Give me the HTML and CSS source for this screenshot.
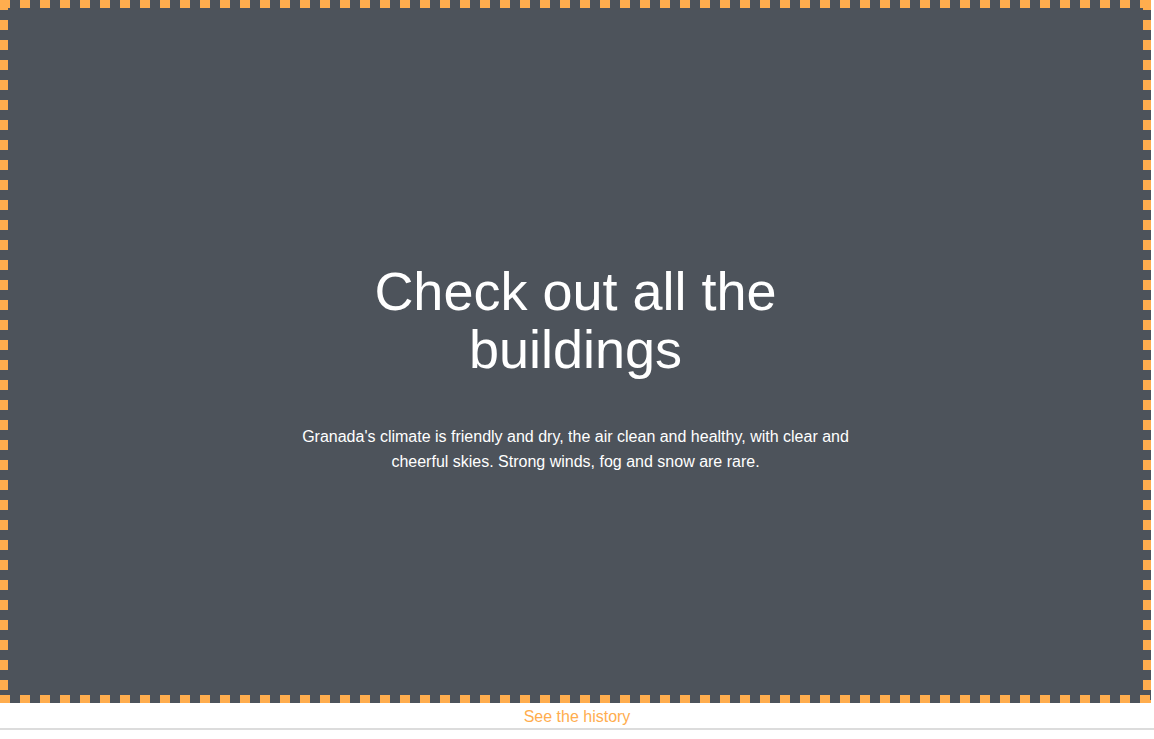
FILE: index.html
```html
<!DOCTYPE html>
<html>
<head>
<meta charset="utf-8">
<link rel="stylesheet" href="styles.css">
</head>
<body>
<section class="hero">
  <div class="hero-content">
    <h1 class="hero-title">Check out all the buildings</h1>
    <p class="hero-text">Granada's climate is friendly and dry, the air clean and healthy, with clear and cheerful skies. Strong winds, fog and snow are rare.</p>
  </div>
</section>
<div class="footer-link">
  <a class="history-link" href="#">See the history</a>
</div>
<div class="bottom-rule"></div>
</body>
</html>
```

FILE: styles.css
```css
html, body {
  margin: 0;
  padding: 0;
  background: #ffffff;
  font-family: "Liberation Sans", Arial, Helvetica, sans-serif;
}
.hero {
  box-sizing: border-box;
  width: calc(100% - 3px);
  height: 703px;
  border: 8px solid transparent;
  background-color: #4d535b;
  background-image:
    repeating-linear-gradient(90deg, #ffad4e 0 10px, transparent 10px 20px),
    repeating-linear-gradient(90deg, #ffad4e 0 10px, transparent 10px 20px),
    repeating-linear-gradient(180deg, #ffad4e 0 10px, transparent 10px 20px),
    repeating-linear-gradient(180deg, #ffad4e 0 10px, transparent 10px 20px);
  background-size: 100% 8px, 100% 8px, 8px 100%, 8px 100%;
  background-position: left top, left bottom, left top, right top;
  background-repeat: no-repeat;
  background-origin: border-box;
  background-clip: border-box;
  display: flex;
  align-items: center;
  justify-content: center;
}
.hero-content {
  width: 580px;
  text-align: center;
  color: #ffffff;
  margin-top: 32px;
}
.hero-title {
  font-size: 54px;
  font-weight: 400;
  line-height: 58px;
  margin: 0 auto 46px;
  width: 440px;
}
.hero-text {
  font-size: 16px;
  line-height: 25px;
  margin: 0;
}
.footer-link {
  text-align: center;
  height: 25px;
  line-height: 27px;
}
.history-link {
  color: #ffad4e;
  text-decoration: none;
  font-size: 16px;
}
.bottom-rule {
  height: 2px;
  background: #dcdcdc;
}
```
